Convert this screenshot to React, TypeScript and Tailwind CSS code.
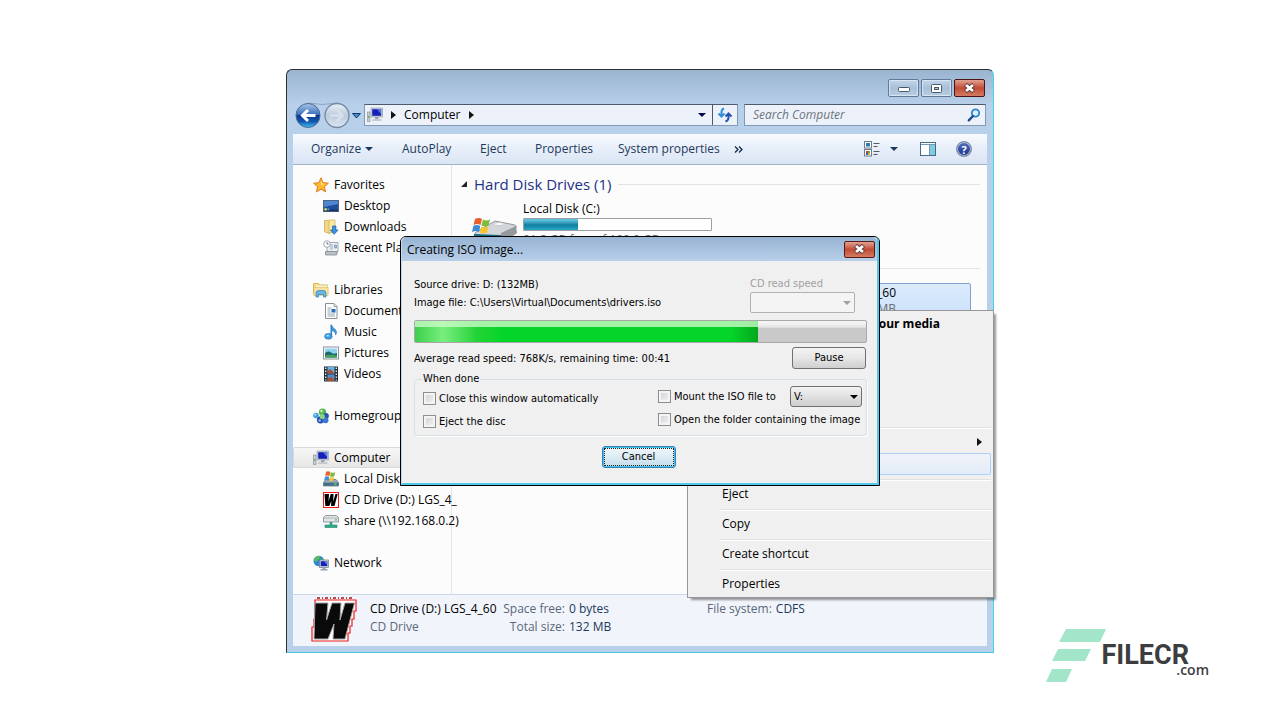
import type { ReactNode } from "react";

type IconProps = { className?: string };

const base = "shrink-0";

function ComputerIcon() {
  return (
    <svg className={base} width="16" height="16" viewBox="0 0 16 16" aria-hidden="true">
      <rect x="0.5" y="5" width="2.5" height="9.5" fill="#c9cfd6" stroke="#7d8791" strokeWidth="0.6" />
      <rect x="1.2" y="9" width="1" height="2" fill="#3fae46" />
      <rect x="4" y="1" width="11.5" height="9" fill="#cdd3da" stroke="#8b949e" strokeWidth="0.6" />
      <rect x="5.2" y="2.2" width="9" height="6.6" fill="#1420b8" />
      <path d="M10 2.2h4.2v5z" fill="#5d7be8" />
      <path d="M8 10h3.5v2.2H8z" fill="#9aa3ad" />
      <path d="M5.5 12.2h8.5l.8 1.6H4.8z" fill="#b9c0c8" />
    </svg>
  );
}

function StarIcon() {
  return (
    <svg className={base} width="16" height="16" viewBox="0 0 16 16" aria-hidden="true">
      <path d="M8 .8l2.1 4.9 5.3.5-4 3.5 1.2 5.2L8 12.2l-4.6 2.7 1.2-5.2-4-3.5 5.3-.5z" fill="#ffb92e" stroke="#e07a28" strokeWidth="1" strokeLinejoin="round" />
      <path d="M8 3l1.3 3.6 3.2.4L8 8z" fill="#ffe48e" />
    </svg>
  );
}

function DesktopIcon() {
  return (
    <svg className={base} width="16" height="16" viewBox="0 0 16 16" aria-hidden="true">
      <rect x="0.5" y="2.5" width="15" height="11" fill="#1d4f9c" stroke="#4c6488" />
      <path d="M1 3h14v3L1 9z" fill="#4f86cf" />
      <rect x="1" y="11.5" width="14" height="1.8" fill="#17315f" />
      <circle cx="2.6" cy="11.4" r="1.3" fill="#e7d249" />
      <rect x="4.5" y="10.6" width="1.6" height="1.6" fill="#4ac0ef" />
    </svg>
  );
}

function DownloadsIcon() {
  return (
    <svg className={base} width="16" height="16" viewBox="0 0 16 16" aria-hidden="true">
      <path d="M1.5 1.5h4l1.2 1.2v12l-5.2-2z" fill="#f1d889" stroke="#c9a545" strokeWidth="0.7" />
      <path d="M6 1h6v12.5H6z" fill="#fbe9a4" stroke="#d1b055" strokeWidth="0.7" />
      <path d="M9.5 7h3.400v4h2.200l-3.900 4.300L7.300 11h2.200z" fill="#3a93dc" stroke="#1c5ea5" strokeWidth="0.7" />
    </svg>
  );
}

function RecentIcon() {
  return (
    <svg className={base} width="16" height="16" viewBox="0 0 16 16" aria-hidden="true">
      <path d="M4 2.500h11v9H4z" fill="#eef1f4" stroke="#8e979f" strokeWidth="0.8" />
      <path d="M7 5h3M7 7h3M7 9h3M11.500 5h2v3h-2z" stroke="#7c9cbc" strokeWidth="0.8" fill="#9fb9d2" />
      <path d="M2.500 11.500h12l-1 3.500h-11z" fill="#b8bfc6" stroke="#848d96" strokeWidth="0.8" />
      <circle cx="4" cy="4" r="3.300" fill="#fff" stroke="#9099a2" strokeWidth="0.8" />
      <path d="M4 2v2h1.700" stroke="#56606a" strokeWidth="0.8" fill="none" />
    </svg>
  );
}

function LibrariesIcon() {
  return (
    <svg className={base} width="16" height="16" viewBox="0 0 16 16" aria-hidden="true">
      <path d="M.5 1.500h5l1 1.500h8V12H.5z" fill="#f6dc85" stroke="#cfa748" strokeWidth="0.8" />
      <path d="M3 3.500h11.500V8H3z" fill="#fdf3c8" />
      <path d="M.8 5.500h14.400v8H.8z" fill="#f7e39b" stroke="#d5b055" strokeWidth="0.5" />
      <path d="M3 15V11q0-2.500 3-2.500h4q3 0 3 2.500v4h-2.500v-2.500h-5V15z" fill="#6ab7e6" stroke="#2f7db9" strokeWidth="0.7" />
    </svg>
  );
}

function DocumentIcon() {
  return (
    <svg className={base} width="16" height="16" viewBox="0 0 16 16" aria-hidden="true">
      <path d="M2.500.5h8.500l3 3v12H2.500z" fill="#fff" stroke="#8a9097" />
      <path d="M11 .5v3h3" fill="#dde3e9" stroke="#8a9097" strokeWidth="0.8" />
      <path d="M4.500 5h4M4.500 7h3M4.500 9h3M4.500 11h7.500M4.500 13h7.500" stroke="#7c8b9b" strokeWidth="0.8" />
      <rect x="8.500" y="6" width="4" height="3.500" fill="#276fbe" />
    </svg>
  );
}

function MusicIcon() {
  return (
    <svg className={base} width="16" height="16" viewBox="0 0 16 16" aria-hidden="true">
      <path d="M8.500.8q.5 2.700 3 3.900 3.300 2.300 1.200 6.300.3-3.500-4.200-4.500z" fill="#3c9fe4" stroke="#1f6db4" strokeWidth="0.6" />
      <path d="M7.500.8H9v11.700H7.500z" fill="#2a80ca" />
      <ellipse cx="5.400" cy="12.300" rx="3.800" ry="2.900" fill="#3c9fe4" stroke="#1c62a6" strokeWidth="0.6" />
      <ellipse cx="4.700" cy="11.700" rx="1.500" ry="0.900" fill="#a3dbfb" />
    </svg>
  );
}

function PicturesIcon() {
  return (
    <svg className={base} width="16" height="16" viewBox="0 0 16 16" aria-hidden="true">
      <rect x="0.500" y="2" width="15" height="12" fill="#fff" stroke="#8b939b" />
      <rect x="2" y="3.500" width="12" height="9" fill="#8fd3ef" />
      <path d="M2 8q4-2.500 6-.5t6 .5v4.500H2z" fill="#1b6a72" />
      <path d="M2 10.500q6-1.500 12 0v2H2z" fill="#47a257" />
    </svg>
  );
}

function VideosIcon() {
  return (
    <svg className={base} width="16" height="16" viewBox="0 0 16 16" aria-hidden="true">
      <rect x="1" y="0.500" width="14" height="15" fill="#242b33" />
      <rect x="4.500" y="1" width="7" height="6.500" fill="#62b2e6" />
      <rect x="4.500" y="8.500" width="7" height="6.500" fill="#4b95d1" />
      <path d="M4.500 5l3-2 4 4.500h-7zM4.500 12.500l4-2 3 4.500h-7z" fill="#a8502f" />
      <path d="M2.700 1.500v13M13.300 1.500v13" stroke="#e6eaee" strokeWidth="1.400" strokeDasharray="1.500 1.500" />
    </svg>
  );
}

function HomegroupIcon() {
  return (
    <svg className={base} width="16" height="16" viewBox="0 0 16 16" aria-hidden="true">
      <circle cx="3" cy="7.500" r="2.800" fill="#3fa3e3" />
      <circle cx="9.500" cy="4.200" r="3.600" fill="#59b84a" />
      <circle cx="13" cy="8" r="2.900" fill="#2b50b4" />
      <circle cx="7.500" cy="11.800" r="3.600" fill="#294bb0" />
      <circle cx="12.500" cy="12.200" r="3" fill="#3d77d4" />
      <circle cx="9.300" cy="8.500" r="2.600" fill="#86d57a" />
      <circle cx="8.500" cy="3" r="1.200" fill="#d4f5cc" />
      <circle cx="2.400" cy="6.700" r="0.900" fill="#cdeafd" />
      <circle cx="6.700" cy="12.500" r="1.200" fill="#9dbbf2" />
    </svg>
  );
}

function DiskIcon() {
  return (
    <svg className={base} width="16" height="16" viewBox="0 0 16 16" aria-hidden="true">
      <path d="M3 8.500h10l2.500 3v3.500H.5v-3.500z" fill="#9aa9b5" stroke="#5b6772" strokeWidth="0.700" />
      <path d="M.8 11.700h14.400v3H.8z" fill="#3f6f86" />
      <rect x="11" y="12.500" width="2.500" height="1.200" fill="#73e07b" />
      <path d="M3 .8q2.300-1 4.400.3L6.500 5q-2-1-4.300 0z" fill="#e8642c" />
      <path d="M8 1.300q2.200 1 4.300 0L11.200 5.300q-2 1-4.200 0z" fill="#79b93c" />
      <path d="M2 5.700q2.200-1 4.300 0L5.500 9.500q-2-1-4.300 0z" fill="#3f8fd8" />
      <path d="M7 6q2 1 4 0l-.7 3.600q-2 1-4 0z" fill="#f8c52e" />
    </svg>
  );
}

function ShareIcon() {
  return (
    <svg className={base} width="16" height="16" viewBox="0 0 16 16" aria-hidden="true">
      <path d="M2.500 2.500h11l2 2v4.500H.5V4.500z" fill="#e3e6e9" stroke="#7f878e" strokeWidth="0.800" />
      <path d="M.8 5h14.400" stroke="#9ea5ac" strokeWidth="0.800" />
      <rect x="12" y="6.300" width="2" height="1.200" fill="#40c34b" />
      <path d="M7 9.500h2v2.500h5v2.500H2V12h5z" fill="#33ac8a" stroke="#1d7f68" strokeWidth="0.600" />
    </svg>
  );
}

function NetworkIcon() {
  return (
    <svg className={base} width="16" height="16" viewBox="0 0 16 16" aria-hidden="true">
      <circle cx="5.800" cy="6" r="5.300" fill="#2d86d6" />
      <path d="M2 3q3-3 6-2L6 4 3.500 6.500.8 6zM7 5l3-2 1 3-3 3z" fill="#57c04d" />
      <rect x="6.500" y="5" width="9" height="7.500" fill="#cfd7df" stroke="#6f7b88" strokeWidth="0.700" />
      <rect x="7.700" y="6.200" width="6.600" height="5" fill="#1523b5" />
      <path d="M11 6.200h3.300v3.500z" fill="#6787ee" />
      <path d="M9.500 12.500h3v1.500h2v1.500h-7V14h2z" fill="#98a2ad" />
    </svg>
  );
}

/* slanted W badge for the details pane */
function WBadge({ className }: IconProps) {
  return (
    <svg className={className} viewBox="0 0 46 46" aria-hidden="true">
      <path d="M4 3h41v11h-2v8h-2v7h-2v7h-2v8H1V30h2v-8h1z" fill="#fff" stroke="#f01a1a" strokeWidth="1.200" />
      <path d="M6 1h36" stroke="#a01414" strokeWidth="1.500" strokeDasharray="3 2 1 2" />
      <path d="M4 6h13l-1.500 17L21 6h9l-1 17L34 6h9.500L34 42H22l1-15-6 15H3z" fill="#0a0a0a" stroke="#a3a3a3" strokeWidth="1" />
    </svg>
  );
}

function SmallW() {
  return (
    <svg className={base} width="16" height="16" viewBox="0 0 16 16" aria-hidden="true">
      <rect x="0.500" y="0.500" width="15" height="15" fill="#fff" stroke="#f01a1a" />
      <path d="M1.500 2H6l-.5 7.500L7.700 2h2.800l-.3 7.500L12.500 2h2.200L11.500 14H8l.3-5-2 5H2.300z" fill="#000" />
    </svg>
  );
}

function DriveIcon() {
  return (
    <svg className="h-8 w-12 shrink-0" viewBox="0 0 48 32" aria-hidden="true">
      <path d="M5 14L24 3l20 4q2 1 1 3L30 23 3 18z" fill="#d3d6d9" stroke="#82878d" strokeWidth="0.800" />
      <path d="M30 15L45 8l1 7-16 12z" fill="#94999f" />
      <path d="M3 16l27 1v9L3 24z" fill="#176a7f" />
      <ellipse cx="28" cy="6" rx="5" ry="1.500" fill="#f8f9fa" stroke="#aaafb4" strokeWidth="0.500" />
      <path d="M4 1q4-2 7 0l-1.500 6q-3-2-7 0z" fill="#e8602a" />
      <path d="M12 1.500q3.500 2 7 0L17.500 7.500q-3.500 2-7 0z" fill="#7dbb3b" />
      <path d="M2.300 8q4-2 7 0L8 14q-3-2-7 0z" fill="#3b8bd8" />
      <path d="M10.300 8.500q3.500 2 7 0L16 14.500q-3.500 2-7 0z" fill="#f8c42a" />
    </svg>
  );
}

function NavArrows() {
  return (
    <svg className="h-[22px] w-[71px] shrink-0 overflow-visible" viewBox="0 0 71 22" aria-hidden="true">
      <defs>
        <linearGradient id="back" x1="0" y1="0" x2="0" y2="1">
          <stop offset="0" stopColor="#a9c6ea" />
          <stop offset="0.460" stopColor="#3b70bd" />
          <stop offset="0.500" stopColor="#0b3790" />
          <stop offset="0.750" stopColor="#1457ae" />
          <stop offset="1" stopColor="#3fc0f5" />
        </linearGradient>
        <linearGradient id="fwd" x1="0" y1="0" x2="0" y2="1">
          <stop offset="0" stopColor="#e9f0f7" />
          <stop offset="0.500" stopColor="#bccbdc" />
          <stop offset="1" stopColor="#dbe6f2" />
        </linearGradient>
      </defs>
      <path d="M15-1q14 3 29 0" fill="none" stroke="#8ea6c1" />
      <circle cx="15" cy="11.500" r="12" fill="url(#back)" stroke="#4b6a93" />
      <circle cx="44" cy="11.500" r="12" fill="url(#fwd)" stroke="#7489a3" strokeWidth="1.300" />
      <path d="M22.500 11.500H10M15 6l-5.500 5.500L15 17" stroke="#fff" strokeWidth="3" fill="none" />
      <path d="M37 11.500h12M44 6l5.500 5.500L44 17" stroke="#d7e1ec" strokeWidth="2.500" fill="none" />
      <path d="M59.500 9.500h8l-4 4.500z" fill="#3a8fd0" stroke="#123a6e" />
    </svg>
  );
}

function Caret({ className }: IconProps) {
  return (
    <svg className={className} width="8" height="4" viewBox="0 0 8 4" aria-hidden="true">
      <path d="M0 0h8L4 4z" fill="currentColor" />
    </svg>
  );
}

function RightTriangle({ className }: IconProps) {
  return (
    <svg className={className} width="5" height="8" viewBox="0 0 5 8" aria-hidden="true">
      <path d="M0 0v8l5-4z" fill="#111" />
    </svg>
  );
}

function CloseGlyph() {
  return (
    <svg width="13" height="10" viewBox="0 0 13 10" aria-hidden="true">
      <path d="M2.500 1.500l8 7M10.500 1.500l-8 7" stroke="#5a3535" strokeWidth="4.400" />
      <path d="M3 2l7 6M10 2L3 8" stroke="#fff" strokeWidth="2.800" />
    </svg>
  );
}

type TreeItem = { label: string; icon: ReactNode; children?: TreeItem[]; selected?: boolean };

const tree: TreeItem[] = [
  {
    label: "Favorites",
    icon: <StarIcon />,
    children: [
      { label: "Desktop", icon: <DesktopIcon /> },
      { label: "Downloads", icon: <DownloadsIcon /> },
      { label: "Recent Places", icon: <RecentIcon /> },
    ],
  },
  {
    label: "Libraries",
    icon: <LibrariesIcon />,
    children: [
      { label: "Documents", icon: <DocumentIcon /> },
      { label: "Music", icon: <MusicIcon /> },
      { label: "Pictures", icon: <PicturesIcon /> },
      { label: "Videos", icon: <VideosIcon /> },
    ],
  },
  { label: "Homegroup", icon: <HomegroupIcon /> },
  {
    label: "Computer",
    icon: <ComputerIcon />,
    selected: true,
    children: [
      { label: "Local Disk", icon: <DiskIcon /> },
      { label: "CD Drive (D:) LGS_4_", icon: <SmallW /> },
      { label: "share (\\\\192.168.0.2)", icon: <ShareIcon /> },
    ],
  },
  { label: "Network", icon: <NetworkIcon /> },
];

function TitleBar() {
  const small =
    "flex h-[18px] w-[31px] items-center justify-center rounded-[2px] border border-[#5f7896] bg-linear-to-b from-[#c3d5ea] via-[#a9c0da] to-[#b9cde4] shadow-[inset_0_0_0_1px_#d8e5f3]";
  return (
    <div className="flex justify-end gap-[2px] pt-[9px] pr-[2px] pb-[7px]">
      <button className={small} aria-label="Minimize">
        <svg width="12" height="10" viewBox="0 0 12 10" aria-hidden="true">
          <rect x="0.500" y="4.500" width="11" height="4" rx="1" fill="#fff" stroke="#4d5967" />
        </svg>
      </button>
      <button className={small} aria-label="Maximize">
        <svg width="11" height="9" viewBox="0 0 11 9" aria-hidden="true">
          <rect x="0.500" y="0.500" width="10" height="8" rx="1" fill="#fff" stroke="#4d5967" />
          <rect x="3.500" y="3.500" width="4" height="2" fill="#a9c0da" stroke="#4d5967" />
        </svg>
      </button>
      <button
        aria-label="Close"
        className="flex h-[18px] w-[31px] items-center justify-center rounded-[2px] border border-[#4a1512] bg-linear-to-b from-[#e0a294] via-[#c14a34] to-[#d27a64]"
      >
        <CloseGlyph />
      </button>
    </div>
  );
}

function NavBar() {
  return (
    <div className="flex items-center pr-[1px] pb-2">
      <NavArrows />
      <div className="flex h-[22px] flex-1 items-center border border-[#8199b4] border-t-[#4c5a6b] bg-[#edf2fa] text-black">
        <span className="pl-[2px]"><ComputerIcon /></span>
        <RightTriangle className="ml-2" />
        <button className="ml-2">Computer</button>
        <RightTriangle className="ml-2" />
        <button className="ml-auto px-[6px] text-[#00004a]" aria-label="Previous locations">
          <Caret />
        </button>
        <button className="flex h-full w-[25px] items-center justify-center border-l border-[#4c5a6b]" aria-label="Refresh">
          <svg width="16" height="16" viewBox="0 0 16 16" aria-hidden="true">
            <path d="M7 1.500Q4.500 2.500 4.500 5v4M1.500 6.500l3 3 3-3" fill="none" stroke="#2f8fdc" strokeWidth="2" />
            <path d="M8.500 14.500q3-1 3-4V7M8.500 9.500l3-3 3 3" fill="none" stroke="#2553b4" strokeWidth="2" />
          </svg>
        </button>
      </div>
      <div className="ml-[6px] flex h-[22px] w-[242px] items-center border border-[#8199b4] border-t-[#4c5a6b] bg-[#edf2fa] pr-1 pl-2">
        <input
          aria-label="Search Computer"
          placeholder="Search Computer"
          className="min-w-0 flex-1 bg-transparent italic outline-none placeholder:text-[#6c737c]"
        />
        <svg width="14" height="14" viewBox="0 0 14 14" aria-hidden="true">
          <circle cx="8.500" cy="5" r="3.700" fill="#dff0fc" stroke="#2a86cc" strokeWidth="1.800" />
          <path d="M6 8L1.800 12.300" stroke="#1f4a8c" strokeWidth="2.400" strokeLinecap="round" />
        </svg>
      </div>
    </div>
  );
}

function Toolbar() {
  return (
    <div className="flex h-[31px] items-center border-b border-[#a0b4ca] bg-linear-to-b from-[#f8fbfe] via-[#e6eef9] via-50% to-[#dbe5f3] pr-[15px] pl-[18px] text-left text-[#1e395b]">
      <button className="flex w-[91px] items-center gap-1">
        Organize <Caret />
      </button>
      <button className="w-[78px] text-left">AutoPlay</button>
      <button className="w-[55px] text-left">Eject</button>
      <button className="w-[83px] text-left">Properties</button>
      <button className="w-[116px] text-left whitespace-nowrap">System properties</button>
      <button aria-label="More commands">
        <svg width="9" height="7" viewBox="0 0 9 7" aria-hidden="true">
          <path d="M1 .5l3 3-3 3M5 .5l3 3-3 3" stroke="#14284a" strokeWidth="1.300" fill="none" />
        </svg>
      </button>
      <button className="ml-auto flex items-center gap-[9px]" aria-label="Change your view">
        <svg width="17" height="16" viewBox="0 0 17 16" aria-hidden="true">
          <rect x="0.500" y="0.500" width="7" height="6.500" fill="#fff" stroke="#6f7a86" />
          <rect x="2" y="2" width="4" height="3.500" fill="#2b7bb5" />
          <rect x="0.500" y="8.500" width="7" height="6.500" fill="#fff" stroke="#6f7a86" />
          <path d="M2 10h2v2H2z" fill="#d33b2c" />
          <path d="M4 10h2v2H4z" fill="#4caf50" />
          <path d="M2 12h2v2H2z" fill="#2b62c4" />
          <path d="M4 12h2v2H4z" fill="#f0b41c" />
          <path d="M9.500 2.500h6M9.500 5.500h4M9.500 10.500h6M9.500 13.500h4" stroke="#4f5b69" />
        </svg>
        <Caret />
      </button>
      <button className="ml-[22px]" aria-label="Show the preview pane">
        <svg width="16" height="14" viewBox="0 0 16 14" aria-hidden="true">
          <rect x="0.500" y="0.500" width="15" height="13" fill="#fdfeff" stroke="#476a85" />
          <rect x="10" y="3" width="5" height="10" fill="#7ecbe4" />
          <path d="M1 2.500h14M9.500 3v10" stroke="#7a97ac" />
        </svg>
      </button>
      <button className="ml-5 flex size-4 items-center justify-center rounded-full border border-[#7c8aa0] bg-linear-to-b from-[#5672c4] to-[#152e8a] text-[11px] leading-none font-bold text-white ring-1 ring-[#b9c3d2] ring-inset" aria-label="Help">
        ?
      </button>
    </div>
  );
}

function TreeRow({ item, nested }: { item: TreeItem; nested?: boolean }) {
  return (
    <a
      href="#"
      className={
        "flex h-[21px] items-center gap-[5px] whitespace-nowrap " +
        (nested ? "pl-[30px]" : "pl-5") +
        (item.selected ? " rounded-[2px] bg-linear-to-b from-[#f8f8f8] to-[#e5e5e5] shadow-[inset_0_0_0_1px_#d9d9d9]" : "")
      }
    >
      {item.icon}
      <span>{item.label}</span>
    </a>
  );
}

function Sidebar() {
  return (
    <nav className="flex w-[159px] shrink-0 flex-col gap-[21px] border-r border-[#dbe6f2] pt-[9px] pb-[21px]">
      {tree.map(group => (
        <div key={group.label}>
          <TreeRow item={group} />
          {group.children?.map(child => <TreeRow key={child.label} item={child} nested />)}
        </div>
      ))}
    </nav>
  );
}

function GroupHeading({ children }: { children: ReactNode }) {
  return (
    <h2 className="flex h-5 items-center gap-[7px] text-[15px] leading-5 whitespace-nowrap text-[#1e3287]">
      <svg width="6" height="6" viewBox="0 0 6 6" aria-hidden="true">
        <path d="M6 0v6H0z" fill="#222" />
      </svg>
      {children}
      <span className="h-px flex-1 bg-[#e0e3e8]" />
    </h2>
  );
}

function Drives() {
  return (
    <div className="min-w-0 flex-1 pt-[9px] pr-[7px] pl-[9px]">
      <GroupHeading>Hard Disk Drives (1)</GroupHeading>
      <div className="flex pt-[7px] pl-[10px]">
        <div className="pt-[17px]"><DriveIcon /></div>
        <div className="w-[193px] pl-1">
          <p className="leading-4">Local Disk (C:)</p>
          <div className="mt-[1px] h-[13px] rounded-[1px] border border-[#9a9fa4] bg-white">
            <div className="h-full w-[29%] bg-linear-to-b from-[#5cc3de] from-10% via-[#0b7f9f] via-55% to-[#2aa8c6]" />
          </div>
          <p className="pt-px leading-4 whitespace-nowrap text-[#6d6d6d]">91.2 GB free of 199.9 GB</p>
        </div>
      </div>
      <div className="pt-[8px]">
        <GroupHeading>Devices with Removable Storage (1)</GroupHeading>
      </div>
      <div className="mt-[5px] mr-[9px] ml-auto h-[54px] w-[268px] rounded-[2px] border border-[#7da2ce] bg-linear-to-b from-[#dcebfc] to-[#c1dbfc] pt-[1px] pr-[74px] text-right leading-4">
        <p>CD Drive (D:) LGS_4_60</p>
        <p className="text-[#6d6d6d]">0 bytes free of 132 MB</p>
      </div>
    </div>
  );
}

function DetailsPane() {
  return (
    <footer className="flex h-[52px] border-t border-[#c9d9ea] bg-[#f1f5fb] pl-[18px] leading-[18px] whitespace-nowrap">
      <WBadge className="mt-[2px] size-[46px]" />
      <div className="w-[138px] pt-[5px] pl-[13px]">
        <p className="text-black">CD Drive (D:) LGS_4_60</p>
        <p className="text-[#5a6779]">CD Drive</p>
      </div>
      <dl className="ml-[6px] grid grid-cols-[64px_1fr] content-start gap-x-1 pt-[5px]">
        <dt className="text-right text-[#5a6779]">Space free:</dt>
        <dd className="text-[#1e395b]">0 bytes</dd>
        <dt className="text-right text-[#5a6779]">Total size:</dt>
        <dd className="text-[#1e395b]">132 MB</dd>
      </dl>
      <dl className="ml-auto flex w-[280px] gap-1 pt-[5px]">
        <dt className="text-[#5a6779]">File system:</dt>
        <dd className="text-[#1e395b]">CDFS</dd>
      </dl>
    </footer>
  );
}

function Separator() {
  return <div className="mt-1 mb-[2px] ml-[29px] h-[2px] border-t border-[#e0e0e0] bg-white" />;
}

function ContextMenu() {
  const item = "flex h-[22px] w-full items-center pl-8 text-left whitespace-nowrap";
  return (
    <div className="absolute top-[241px] right-0 w-[307px] border border-[#979797] bg-[#f0f0f0] p-[2px] text-black shadow-[3px_3px_2px_-1px_rgba(0,0,0,0.4)]">
      <button className={item + " justify-end pr-[51px] font-bold"}>Run program from your media</button>
      <div className="h-[88px]" />
      <Separator />
      <button className={item + " justify-end pr-[9px]"} aria-label="Share with">
        <RightTriangle />
      </button>
      <button
        className={item + " rounded-[2px] bg-linear-to-b from-[#f0f3f8] to-[#e3ecf9] shadow-[inset_0_0_0_1px_#aecff7]"}
        aria-label="Create ISO image"
      />
      <Separator />
      <button className={item}>Eject</button>
      <Separator />
      <button className={item}>Copy</button>
      <Separator />
      <button className={item}>Create shortcut</button>
      <Separator />
      <button className={item}>Properties</button>
    </div>
  );
}

function Check({ label }: { label: string }) {
  return (
    <label className="flex h-[13px] items-center gap-[3px] whitespace-nowrap">
      <input
        type="checkbox"
        className="size-[13px] appearance-none border border-[#8e8f8f] bg-linear-to-br from-[#cbcfd5] to-[#f6f6f6] shadow-[inset_0_0_0_2px_#f4f4f4] checked:bg-[#3f6fb5]"
      />
      {label}
    </label>
  );
}

function IsoDialog() {
  return (
    <section
      aria-label="Creating ISO image"
      className="absolute top-[167px] left-[114px] w-[480px] rounded-t-[6px] border border-black bg-[#f0f0f0] font-['DejaVu_Sans_Condensed','Open_Sans',sans-serif] text-[11px] leading-[14px] text-black"
    >
      <div className="rounded-t-[5px] border-r-2 border-b-2 border-l border-[#4fc9ec] border-l-[#c4d7ec]">
        <header className="flex h-[24px] items-center justify-between rounded-t-[5px] bg-linear-to-b from-[#98b4d3] to-[#b8cfe9] pr-[2px] pl-[5px]">
          <h1 className="pt-[2px] font-['Open_Sans',sans-serif] text-[12px]">Creating ISO image...</h1>
          <button
            aria-label="Close"
            className="flex h-[17px] w-[31px] items-center justify-center rounded-[2px] border border-[#5b1a14] bg-linear-to-b from-[#e0a294] via-[#c14a34] to-[#d27a64]"
          >
            <CloseGlyph />
          </button>
        </header>
        <div className="pt-[15px] pr-[10px] pb-[15px] pl-3">
          <div className="flex h-[44px] justify-between">
            <div className="leading-[18px]">
              <p>Source drive: D: (132MB)</p>
              <p>Image file: C:\Users\Virtual\Documents\drivers.iso</p>
            </div>
            <div className="w-[117px] text-[#a0a0a0]">
              <label htmlFor="speed" className="block h-4 pt-px">CD read speed</label>
              <div className="relative flex w-[105px] items-center">
                <select id="speed" disabled className="h-[21px] w-full appearance-none rounded-[2px] border border-[#adb2b5] bg-[#f4f4f4]">
                  <option></option>
                </select>
                <Caret className="pointer-events-none absolute right-1" />
              </div>
            </div>
          </div>
          <div
            role="progressbar"
            aria-label="Read progress"
            aria-valuenow={76}
            className="h-[23px] rounded-[2px] border border-[#a8a8a8] bg-linear-to-b from-[#f4f4f4] from-10% via-[#e2e2e2] via-30% to-[#c9c9c9] to-35%"
          >
            <div className="h-full w-[76%] bg-linear-to-r from-[#3ecf4e] via-[#05d52a] via-25% to-[#05d52a] to-95%">
              <div className="h-full bg-linear-to-r from-transparent from-0% via-[#78ee7e] via-8% to-transparent to-18%">
                <div className="h-full bg-linear-to-l from-[#05a81c] to-transparent to-8%">
                  <div className="h-[6px] bg-[#c9fac5]/80" />
                </div>
              </div>
            </div>
          </div>
          <div className="flex h-[29px] justify-between pt-1 pr-px">
            <p className="pt-[5px]">Average read speed: 768K/s, remaining time: 00:41</p>
            <button className="h-[22px] w-[74px] rounded-[3px] border border-[#707070] bg-linear-to-b from-[#f4f4f4] via-[#e6e6e6] to-[#cfcfcf]">
              Pause
            </button>
          </div>
          <fieldset className="flex justify-between rounded-[3px] border border-[#d5dfe5] pr-1 pb-[7px] pl-2 shadow-[1px_1px_0_#fff]">
            <legend className="-ml-px px-px">When done</legend>
            <div className="flex flex-col gap-[10px] pt-[6px]">
              <Check label="Close this window automatically" />
              <Check label="Eject the disc" />
            </div>
            <div className="flex w-[204px] flex-col gap-[6px]">
              <div className="flex items-center justify-between">
                <Check label="Mount the ISO file to" />
                <div className="relative flex items-center">
                  <select aria-label="Virtual drive" className="h-[21px] w-[72px] appearance-none rounded-[3px] border border-[#707070] bg-linear-to-b from-[#f2f2f2] to-[#cfcfcf] pl-[3px]">
                    <option>V:</option>
                  </select>
                  <Caret className="pointer-events-none absolute right-1" />
                </div>
              </div>
              <Check label="Open the folder containing the image" />
            </div>
          </fieldset>
          <div className="flex justify-center pt-[10px] pr-1">
            <button className="h-[22px] w-[74px] rounded-[3px] border border-[#3c7fb1] bg-linear-to-b from-[#eff5f9] via-[#dcecf5] to-[#c3dcea] shadow-[inset_0_0_0_1px_#3fc4ee]">
              <span className="m-px flex h-[18px] items-center justify-center outline-1 -outline-offset-1 outline-[#222] outline-dotted">Cancel</span>
            </button>
          </div>
        </div>
      </div>
    </section>
  );
}

function FilecrLogo() {
  return (
    <div className="absolute right-[91px] bottom-[38px] flex items-center text-[#3d3d3f]">
      <svg className="h-[53px] w-[60px]" viewBox="0 0 60 53" aria-hidden="true">
        <path d="M20 0h40l-6 13H13zM12 20h33l-6 12H6zM6 40h20l-6 13H0z" fill="#a2e5c8" />
      </svg>
      <div className="-ml-1 pt-2 leading-none">
        <p className="font-['Roboto',sans-serif] text-[27px] leading-7 font-bold">FILECR</p>
        <p className="-mt-[7px] -mr-5 text-right text-[14px] leading-4 font-semibold">.com</p>
      </div>
    </div>
  );
}

export default function App() {
  return (
    <main className="relative min-h-screen bg-white pt-[69px] font-['Open_Sans','Noto_Sans',sans-serif] text-[12px] leading-4 text-black">
      <div className="relative mx-auto w-full max-w-[708px]">
        <div className="rounded-t-[6px] border border-[#2b2f36] border-r-[#43d3ee] border-b-[#43c6e0] bg-linear-to-b from-[#9ab4d0] to-[#b9d0ea] to-[36px] px-[6px] pb-[6px]">
          <TitleBar />
          <NavBar />
          <Toolbar />
          <div className="flex bg-[#fcfcfc]">
            <Sidebar />
            <Drives />
          </div>
          <DetailsPane />
        </div>
        <ContextMenu />
        <IsoDialog />
      </div>
      <FilecrLogo />
    </main>
  );
}
